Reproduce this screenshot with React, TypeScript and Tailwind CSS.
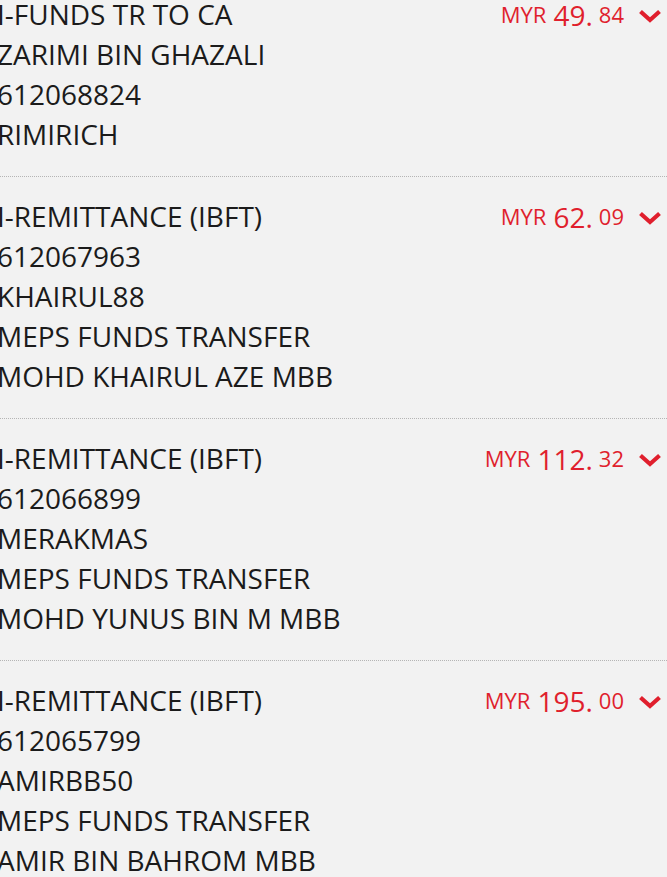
type Txn = { lines: string[]; whole: string; cents: string }

const txns: Txn[] = [
  { lines: ['I-FUNDS TR TO CA', 'ZARIMI BIN GHAZALI', '612068824', 'RIMIRICH'], whole: '49', cents: '84' },
  { lines: ['I-REMITTANCE (IBFT)', '612067963', 'KHAIRUL88', 'MEPS FUNDS TRANSFER', 'MOHD KHAIRUL AZE MBB'], whole: '62', cents: '09' },
  { lines: ['I-REMITTANCE (IBFT)', '612066899', 'MERAKMAS', 'MEPS FUNDS TRANSFER', 'MOHD YUNUS BIN M MBB'], whole: '112', cents: '32' },
  { lines: ['I-REMITTANCE (IBFT)', '612065799', 'AMIRBB50', 'MEPS FUNDS TRANSFER', 'AMIR BIN BAHROM MBB'], whole: '195', cents: '00' },
]

function Chevron() {
  return (
    <svg viewBox="0 0 24 14" className="ml-[14px] mt-[8px] h-[14px] w-[24px]">
      <path d="M2.5 2.5 L12 11 L21.5 2.5" fill="none" stroke="currentColor" strokeWidth="4.2" strokeLinejoin="miter" />
    </svg>
  )
}

function Row({ t }: { t: Txn }) {
  return (
    <div className="flex justify-between border-b border-dotted border-[#b5b5b5] pt-[19px] pb-[22px]">
      <div className="flex flex-col text-[28px] leading-[40px] text-[#1b1b1b]">
        {t.lines.map((l, i) => (
          <span key={i}>{l}</span>
        ))}
      </div>
      <div className="flex items-start pt-[7px] pr-[5px] text-[#e01f2d]">
        <span className="mt-[2px] text-[22px] leading-[22px]">MYR</span>
        <span className="ml-[7px] text-[28px] leading-[28px]">{t.whole}.</span>
        <span className="ml-[6px] mt-[2px] text-[22px] leading-[22px]">{t.cents}</span>
        <Chevron />
      </div>
    </div>
  )
}

export default function App() {
  return (
    <div className="h-[877px] w-[667px] overflow-hidden bg-[#f2f2f2]" style={{ fontFamily: '"Open Sans", sans-serif' }}>
      <div className="-ml-[3px] -mt-[25px]">
        {txns.map((t, i) => (
          <Row key={i} t={t} />
        ))}
      </div>
    </div>
  )
}
